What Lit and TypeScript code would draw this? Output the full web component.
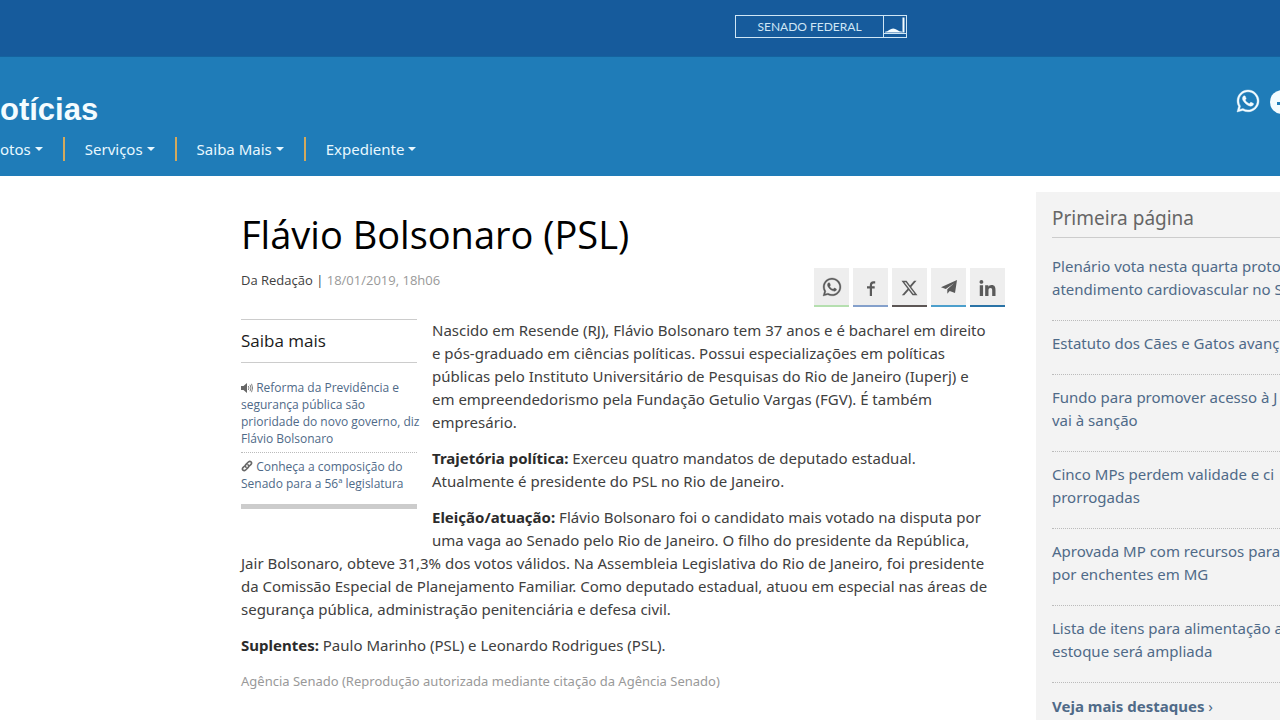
import { LitElement, html, css, svg } from "lit";
import { customElement } from "lit/decorators.js";

const whatsappPath =
  "M380.9 97.1C339 55.1 283.2 32 223.9 32c-122.4 0-222 99.6-222 222 0 39.1 10.2 77.3 29.6 111L0 480l117.7-30.9c32.4 17.7 68.9 27 106.1 27h.1c122.3 0 224.1-99.6 224.1-222 0-59.3-25.2-115-67.1-157zm-157 341.6c-33.2 0-65.7-8.9-94-25.7l-6.7-4-69.8 18.3L72 359.2l-4.4-7c-18.5-29.4-28.2-63.3-28.2-98.2 0-101.7 82.8-184.5 184.6-184.5 49.3 0 95.6 19.2 130.4 54.1 34.8 34.9 56.2 81.2 56.1 130.5 0 101.8-84.9 184.6-186.6 184.6zm101.2-138.2c-5.5-2.8-32.8-16.2-37.9-18-5.1-1.9-8.8-2.8-12.5 2.8-3.7 5.6-14.3 18-17.6 21.8-3.2 3.7-6.5 4.2-12 1.4-32.6-16.3-54-29.1-75.5-66-5.7-9.8 5.7-9.1 16.3-30.3 1.8-3.7.9-6.9-.5-9.7-1.4-2.8-12.5-30.1-17.1-41.2-4.5-10.8-9.1-9.3-12.5-9.5-3.2-.2-6.9-.2-10.6-.2-3.7 0-9.7 1.4-14.8 6.9-5.1 5.6-19.4 19-19.4 46.3 0 27.3 19.9 53.7 22.6 57.4 2.8 3.7 39.1 59.7 94.8 83.8 35.2 15.2 49 16.5 66.6 13.9 10.7-1.6 32.8-13.4 37.4-26.4 4.6-13 4.6-24.1 3.2-26.4-1.3-2.5-5-3.9-10.5-6.6z";

const whatsapp = (size: number) => html`
  <svg width=${size} height=${size} viewBox="0 32 448 448" fill="currentColor" stroke="currentColor" stroke-width="8" overflow="visible" aria-hidden="true">
    <path d=${whatsappPath}></path>
  </svg>`;

const shareLinks = [
  { name: "WhatsApp", tone: "green", icon: whatsapp(18) },
  {
    name: "Facebook",
    tone: "blue",
    icon: html`<svg class="low" width="10" height="15" viewBox="0 0 10 15" fill="none" stroke="currentColor" stroke-width="2.2" aria-hidden="true"><path d="M9.2 1.4H7.6Q4.9 1.4 4.9 4.2V15M1 6.4h7.7"></path></svg>`,
  },
  {
    name: "X",
    tone: "dark",
    icon: html`<svg class="lower" width="17" height="16" viewBox="0 0 16 16" fill="currentColor" aria-hidden="true"><path d="M12.6.75h2.454l-5.36 6.142L16 15.25h-4.937l-3.867-5.07-4.425 5.07H.316l5.733-6.57L0 .75h5.063l3.495 4.633L12.601.75Zm-.86 13.028h1.36L4.323 2.145H2.865z"></path></svg>`,
  },
  {
    name: "Telegram",
    tone: "sky",
    icon: html`<svg width="16" height="14" viewBox="0 0 16 14" fill="currentColor" aria-hidden="true"><path d="M16 0 0 7.2l4.8 1.8L13 3.200 6.300 9.300v4.400l2.400-2.700 5.300 2z"></path></svg>`,
  },
  {
    name: "LinkedIn",
    tone: "navy",
    icon: html`<svg class="lower" width="17" height="16" viewBox="0 0 448 448" fill="currentColor" aria-hidden="true"><path d="M100.28 448H7.4V148.9h92.88zM53.79 108.1C24.09 108.1 0 83.5 0 53.8a53.79 53.79 0 0 1 107.58 0c0 29.7-24.1 54.3-53.79 54.3zM447.9 448h-92.68V302.4c0-34.7-.7-79.2-48.29-79.2-48.29 0-55.69 37.7-55.69 76.7V448h-92.78V148.9h89.08v40.8h1.3c12.4-23.5 42.69-48.3 87.88-48.3 94 0 111.28 61.9 111.28 142.3V448z"></path></svg>`,
  },
];

const headlines = [
  ["Plenário vota nesta quarta proto", "atendimento cardiovascular no S"],
  ["Estatuto dos Cães e Gatos avanç"],
  ["Fundo para promover acesso à J", "vai à sanção"],
  ["Cinco MPs perdem validade e ci", "prorrogadas"],
  ["Aprovada MP com recursos para", "por enchentes em MG"],
  ["Lista de itens para alimentação a", "estoque será ampliada"],
];

const lines = (parts: string[]) =>
  parts.map((part, i) => (i ? html`<br />${part}` : part));

@customElement("app-root")
export class AppRoot extends LitElement {
  static styles = css`
    :host {
      display: block;
      height: 100vh;
      overflow: hidden;
      background: #fff;
      color: #404040;
      font: 15px/23px "Noto Sans", "Open Sans", sans-serif;
    }
    a {
      color: #4f6a88;
      text-decoration: none;
    }
    h1, h2, p, ul {
      margin: 0;
      padding: 0;
      font-weight: normal;
    }
    ul {
      list-style: none;
    }
    svg {
      display: block;
      flex: none;
    }
    .topbar {
      display: flex;
      justify-content: center;
      padding: 15px 0 18px 362px;
      background: #165b9c;
    }
    .senado {
      display: flex;
      align-items: stretch;
      border: 1px solid #cfe6f5;
      color: #cfe6f5;
      font: 12px/21px Lato, sans-serif;
    }
    .senado-name {
      padding: 0 21px;
    }
    .site-header {
      padding-bottom: 15px;
      border-top: 1px solid #14639f;
      background: #1f7cb8;
      color: #fff;
      overflow: hidden;
    }
    .brand-row {
      display: flex;
      justify-content: space-between;
      align-items: flex-start;
      padding-top: 33px;
    }
    .brand {
      color: #f4fcff;
      font: bold 31px/40px "Liberation Sans", sans-serif;
    }
    .social {
      display: flex;
      gap: 11px;
      margin-right: -14px;
    }
    .social a {
      color: #f4fcff;
    }
    .nav {
      display: flex;
      padding-top: 7px;
    }
    .nav-item {
      display: flex;
      align-items: center;
      gap: 4px;
      padding: 0 20px;
      border: 0;
      border-left: 2px solid #d3a95c;
      background: none;
      color: #e8f8ff;
      font: 15px/24px "Noto Sans", sans-serif;
    }
    .nav-item:first-child {
      padding-left: 0;
      border-left: 0;
    }
    .caret {
      border: 4px solid transparent;
      border-top-color: currentColor;
      border-bottom: 0;
    }
    .page {
      display: flex;
      gap: 31px;
      padding: 16px 0 0 241px;
    }
    .article {
      flex: 1;
      min-width: 0;
      padding-top: 17px;
    }
    .title {
      color: #000;
      font: 38px/50px "Open Sans", sans-serif;
    }
    .meta {
      display: flex;
      justify-content: space-between;
      margin: 9px 0 12px;
      font: 13px/25px "Open Sans", sans-serif;
    }
    .date, .credit {
      color: #999;
    }
    .share {
      display: flex;
      gap: 4px;
    }
    .share-link {
      display: flex;
      align-items: center;
      justify-content: center;
      width: 35px;
      height: 37px;
      border-bottom: 2px solid;
      background: #eee;
    }
    .share-link svg {
      color: #5a5a5a;
    }
    .low {
      margin-top: 4px;
    }
    .lower {
      margin-top: 2px;
    }
    .green { border-color: #b5dfaf; }
    .blue { border-color: #84a0cb; }
    .dark { border-color: #5c5655; }
    .sky { border-color: #4c9fcc; }
    .navy { border-color: #2a73a6; }
    .related {
      float: left;
      width: 176px;
      margin: 0 15px 32px 0;
      border-top: 1px solid #ccc;
      border-bottom: 5px solid #ccc;
      font: 12px/17px "Open Sans", sans-serif;
      white-space: nowrap;
    }
    .related-title {
      padding: 9px 0;
      margin-bottom: 11px;
      border-bottom: 1px solid #ccc;
      color: #1a1a1a;
      font-size: 17px;
      line-height: 24px;
    }
    .related-item {
      padding: 5px 0;
    }
    .related-item + .related-item {
      padding-bottom: 12px;
      border-top: 1px dotted #bbb;
    }
    .related-item svg {
      display: inline-block;
      vertical-align: -1px;
    }
    .text p {
      margin-bottom: 13px;
    }
    .text b {
      color: #2b2b2b;
    }
    .text .credit {
      font-size: 13px;
    }
    .highlights {
      flex: none;
      width: 244px;
      box-sizing: border-box;
      padding: 12px 0 40px 16px;
      overflow: hidden;
      background: #f3f3f3;
      white-space: nowrap;
    }
    .highlights-title {
      padding-bottom: 4px;
      border-bottom: 1px solid #ccc;
      color: #666;
      font-size: 19px;
      line-height: 29px;
    }
    .headline {
      padding: 11px 0 19px;
      border-bottom: 1px dotted #bbb;
    }
    .headline:first-child {
      padding-top: 17px;
    }
    .more {
      display: block;
      padding-top: 12px;
    }
  `;

  render() {
    return html`
      <div class="topbar">
        <div class="senado">
          <span class="senado-name">SENADO FEDERAL</span>
          ${svg`<svg width="23" height="21" viewBox="0 0 23 21" aria-hidden="true">
            <path d="M.5 0v21M1 17.500h22" stroke="#cfe6f5" fill="none"></path>
            <path d="M2 15.800q2.500 0 4.200-1.800 4-3 8 0 1.800 1.800 5.200 1.800v.8H2z" fill="#f4fcff"></path>
            <path d="M20.500 1.500v15" stroke="#f4fcff" stroke-width="2"></path>
          </svg>`}
        </div>
      </div>
      <header class="site-header">
        <div class="brand-row">
          <div class="brand">otícias</div>
          <div class="social">
            <a href="#" aria-label="WhatsApp">${whatsapp(22)}</a>
            <a href="#" aria-label="Facebook">
              <svg width="24" height="24" viewBox="0 0 24 24" aria-hidden="true">
                <circle cx="12" cy="12" r="12" fill="currentColor"></circle>
                <path d="M16.500 5H15q-3.500 0-3.500 3.500V24M7 13.500h9" stroke="#1f7cb8" stroke-width="3" fill="none"></path>
              </svg>
            </a>
          </div>
        </div>
        <nav class="nav">
          ${["otos", "Serviços", "Saiba Mais", "Expediente"].map(
            (label) => html`<button class="nav-item" type="button">${label}<span class="caret"></span></button>`
          )}
        </nav>
      </header>
      <div class="page">
        <main class="article">
          <h1 class="title">Flávio Bolsonaro (PSL)</h1>
          <div class="meta">
            <div>Da Redação | <span class="date">18/01/2019, 18h06</span></div>
            <div class="share">
              ${shareLinks.map(
                (s) => html`<a class="share-link ${s.tone}" href="#" aria-label=${s.name}>${s.icon}</a>`
              )}
            </div>
          </div>
          <section class="related">
            <h2 class="related-title">Saiba mais</h2>
            <ul>
              <li class="related-item">
                <svg width="12" height="10" viewBox="0 0 12 10" aria-hidden="true">
                  <path d="M0 3h2.500L6 0v10L2.500 7H0z" fill="#666"></path>
                  <path d="M7.300 3q1.300 2 0 4M9 1.800q2 3.200 0 6.400M10.500.8q2.300 4.200 0 8.400" stroke="#777" fill="none" stroke-width=".9"></path>
                </svg>
                <a href="#">${lines(["Reforma da Previdência e", "segurança pública são", "prioridade do novo governo, diz", "Flávio Bolsonaro"])}</a>
              </li>
              <li class="related-item">
                <svg width="12" height="12" viewBox="0 0 12 12" fill="none" stroke="#666" stroke-width="1.600" stroke-linecap="round" aria-hidden="true">
                  <path d="M5 7.200q-1.400-1.400 0-2.800l2.600-2.600q1.200-1 2.400 0 1.200 1.200 0 2.600L8.600 5.800M7 4.800q1.400 1.400 0 2.800L4.400 10.200q-1.200 1-2.400 0-1.200-1.200 0-2.600l1.400-1.400"></path>
                </svg>
                <a href="#">${lines(["Conheça a composição do", "Senado para a 56ª legislatura"])}</a>
              </li>
            </ul>
          </section>
          <div class="text">
            <p>${lines([
              "Nascido em Resende (RJ), Flávio Bolsonaro tem 37 anos e é bacharel em direito",
              "e pós-graduado em ciências políticas. Possui especializações em políticas",
              "públicas pelo Instituto Universitário de Pesquisas do Rio de Janeiro (Iuperj) e",
              "em empreendedorismo pela Fundação Getulio Vargas (FGV). É também",
              "empresário.",
            ])}</p>
            <p><b>Trajetória política:</b> ${lines([
              "Exerceu quatro mandatos de deputado estadual.",
              "Atualmente é presidente do PSL no Rio de Janeiro.",
            ])}</p>
            <p><b>Eleição/atuação:</b> ${lines([
              "Flávio Bolsonaro foi o candidato mais votado na disputa por",
              "uma vaga ao Senado pelo Rio de Janeiro. O filho do presidente da República,",
              "Jair Bolsonaro, obteve 31,3% dos votos válidos. Na Assembleia Legislativa do Rio de Janeiro, foi presidente",
              "da Comissão Especial de Planejamento Familiar. Como deputado estadual, atuou em especial nas áreas de",
              "segurança pública, administração penitenciária e defesa civil.",
            ])}</p>
            <p><b>Suplentes:</b> Paulo Marinho (PSL) e Leonardo Rodrigues (PSL).</p>
            <p class="credit">Agência Senado (Reprodução autorizada mediante citação da Agência Senado)</p>
          </div>
        </main>
        <aside class="highlights">
          <h2 class="highlights-title">Primeira página</h2>
          <ul>
            ${headlines.map((h) => html`<li class="headline"><a href="#">${lines(h)}</a></li>`)}
          </ul>
          <a class="more" href="#"><b>Veja mais destaques</b> ›</a>
        </aside>
      </div>
    `;
  }
}
